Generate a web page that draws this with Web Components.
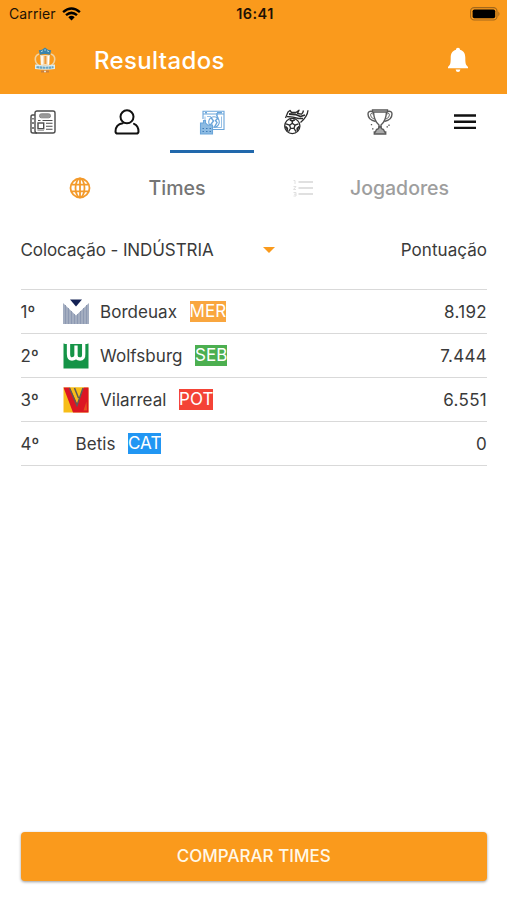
<!DOCTYPE html>
<html lang="pt-BR">
<head>
<meta charset="utf-8">
<meta name="viewport" content="width=device-width, initial-scale=1">
<title>Resultados</title>
<style>
	html, body {
		margin: 0;
		height: 100%;
		background: #fff;
		overflow: hidden;
	}
	body {
		font-family: Inter, "Liberation Sans", sans-serif;
		color: #3a3a3a;
		--brand: #fa9a1c;
	}
</style>
</head>
<body>
<results-page></results-page>
<script>
// Every element clones its own static template into an open shadow root
class BaseElement extends HTMLElement {
	constructor() {
		super();
		const host = document.createElement('template');
		host.innerHTML = this.constructor.template;
		this.attachShadow({mode: 'open'}).appendChild(host.content.cloneNode(true));
	}
}

const ICONS = {
	wifi: `<svg width="19" height="14" viewBox="0 0 19 14" fill="none" stroke="#000" stroke-width="2.5">
		<path d="M1.1 5.1Q9.5-2 17.9 5.1"/><path d="M4 8.1Q9.5 3.6 15 8.1"/>
		<path d="M6.3 10.3Q9.5 7.4 12.7 10.3L9.5 13.5Z" fill="#000" stroke="none"/></svg>`,
	battery: `<svg width="31" height="14" viewBox="0 0 31 14">
		<rect x=".6" y=".6" width="26.4" height="12.4" rx="3.6" fill="none" stroke="#a3681c" stroke-width="1.1"/>
		<rect x="2.6" y="2.4" width="22.6" height="8.8" rx="1.8" fill="#000"/>
		<path d="M28.4 4.6Q30.6 7 28.4 9.4Z" fill="#a3681c"/></svg>`,
	crest: `<svg width="22" height="27" viewBox="0 0 22 27">
		<path d="M5 7Q1 8.5 1.3 12.5Q1.6 17 6 19M17 7Q21 8.5 20.7 12.5Q20.4 17 16 19" fill="none" stroke="#f0d2a0" stroke-width="1.6"/>
		<path d="M6 8H16L15.2 18H6.8Z" fill="#f5dcb4"/>
		<path d="M8 9V17.5M14.4 9V17.5" stroke="#fff" stroke-width="1.5"/>
		<path d="M11.4 9V17" stroke="#ef9a3a" stroke-width="2"/>
		<path d="M4.8 3.2L8 2.8 11 .6 14 2.8 17.2 3.2 16 7.8Q11 6 6 7.8Z" fill="#3a84ab"/>
		<path d="M7 4.8L9 3.7M10.2 3H12M13 3.7L15 4.8" stroke="#b7dce8" stroke-width=".9"/>
		<path d="M1 17.5Q11 19 21 17.5V22Q11 23.5 1 22Z" fill="#dcebee"/>
		<path d="M2.5 20Q11 21.5 19.5 20" fill="none" stroke="#6aa5c2" stroke-width="2.2" stroke-dasharray="2.6 .5"/>
		<path d="M7 24.5H15" stroke="#c9803e" stroke-width="2"/><path d="M10 24.5H12" stroke="#f3e3cf" stroke-width="1.4"/></svg>`,
	bell: `<svg width="22" height="26" viewBox="0 0 22 26" fill="#fff">
		<path d="M11 .8C12.3.8 13 1.6 13 2.8 17 3.8 18.3 7 18.3 10.8 18.3 16 18.5 17.7 21 20V21.2H1V20C3.5 17.7 3.7 16 3.7 10.8 3.7 7 5 3.8 9 2.8 9 1.6 9.7.8 11 .8Z"/>
		<path d="M8.6 22.4H13.4Q13 24.9 11 24.9T8.6 22.4Z"/></svg>`,
	news: `<svg width="26" height="24" viewBox="0 0 26 24" fill="none" stroke="#4c4c4c" stroke-width="1.4">
		<rect x="5" y="1" width="20" height="22" rx="2"/>
		<path d="M5 5H2.5Q1 5 1 7V21Q1 23 3 23H7M3 8V9.5M3 12V14M3 17V19"/>
		<rect x="9.5" y="3.8" width="11" height="4" rx="1.8" fill="#999" stroke="#888" stroke-width="1"/>
		<path d="M8 10.5H10.5M12.5 10.5H22.5M16 13.3H22.5M16 16.3H22.5M16 19.3H22.5" stroke-width="1.1"/>
		<rect x="8" y="13" width="5.7" height="5.7"/><path d="M7.5 20.5H14" stroke-width="1" stroke="#aaa"/></svg>`,
	person: `<svg width="26" height="26" viewBox="0 0 26 26" fill="none" stroke="#111" stroke-width="2" stroke-linecap="round">
		<circle cx="13" cy="7.8" r="6.5"/>
		<path d="M8.8 14.2C3.5 15 1.5 18.3 1.5 22.5Q1.5 24.6 3.7 24.6H22.3Q24.5 24.6 24.5 22.5C24.5 18.7 23 16.2 20 14.9"/></svg>`,
	match: `<svg width="26" height="25" viewBox="0 0 26 25" fill="none" stroke="#6aa5da" stroke-width="1.1">
		<path d="M4 9V1.2H25V19.5H14M4 4H25M6 2.6H8M18 2.6H23"/>
		<path d="M6 6.5V10M22.5 6.5V17.5H15M8 6.5H12" stroke-width=".7"/>
		<circle cx="15" cy="12" r="5.3"/>
		<path d="M17.5 5L19 8 16.5 10.5 18 12.5 15.5 17M12 7.5L14.5 11 11 15.5M18 3V6" stroke-width="1.4"/>
		<path d="M1.5 24V13H4.5V10.5H6.5V13L8.5 15H13.5V24Z" fill="#8dbbe2"/>
		<path d="M3.5 18.5H5M7 18.5H8.5M10.5 18.5H12M3.5 21.5H5M7 21.5H8.5M10.5 21.5H12" stroke="#3f7cb8" stroke-width="1.2"/></svg>`,
	ball: `<svg width="26" height="26" viewBox="0 0 26 26" fill="none" stroke="#2b2b2b" stroke-width="1.3" stroke-linejoin="round">
		<circle cx="9.3" cy="17" r="7.6"/>
		<path d="M9.3 14.2L12 16.2 11 19.3H7.6L6.6 16.2Z"/>
		<path d="M9.3 14.2V11M12 16.2L15.4 14.8M11 19.3L13 22.6M7.6 19.3L5.5 22.6M6.6 16.2L3 14.8"/>
		<path d="M6.8 10.8L9.3 12 11.8 10.8M16.3 17.5L14.3 19.5 14.5 21.8M2.3 17.5L4.3 19.5 4 21.8" stroke-width="1.8"/>
		<path d="M2.5 9L5 3 7 1.5 8.5 3.5 13 3.5 16 1.2 14.5 4.5 18.5 5.2Q20 4 20.5 1.5M25 1.2Q24.5 7.5 17.5 13.5M4 7.5L10 8.2 15.5 9.5 20 9.5"/>
		<path d="M6 5L12.5 5.5 17.5 7.5 22 6" stroke-width="1.8"/></svg>`,
	trophy: `<svg width="26" height="26" viewBox="0 0 26 26" fill="none" stroke="#5a5a5a" stroke-width="1.4">
		<path d="M5.5 1H20.5V3H5.5ZM6.5 3Q7 12 12 16V18H14V16Q19 12 19.5 3"/>
		<path d="M5.7 2.5Q1 1.5 1 5 1 11 8.7 12.5M20.3 2.5Q25 1.5 25 5 25 11 17.3 12.5"/>
		<path d="M6 5Q3.5 3.5 3.5 5.8 3.7 9 7 10M20 5Q22.5 3.5 22.5 5.8 22.3 9 19 10" stroke-width=".9"/>
		<path d="M12 18Q12 20 9.5 20.5L8.3 23H7.3V25H18.7V23H17.7L16.5 20.5Q14 20 14 18Z" fill="#aaa"/>
		<path d="M4.5 15V16.3M5 19.8H6.5M19.5 17.8H21M22 15.5V17" stroke-width="1.3"/></svg>`,
	menu: `<svg width="24" height="18" viewBox="0 0 24 18" stroke="#111" stroke-width="2.4"><path d="M1 2.5H23M1 8.7H23M1 14.9H23"/></svg>`,
	globe: `<svg width="22" height="22" viewBox="0 0 22 22" fill="none" stroke="#f39a2b" stroke-width="1.8">
		<circle cx="11" cy="11" r="9.5"/><ellipse cx="11" cy="11" rx="4.5" ry="9.5"/><path d="M11 1.5V20.5M2.5 7.7H19.5M2.5 14.3H19.5"/></svg>`,
	list: `<svg width="22" height="18" viewBox="0 0 22 18" fill="none" stroke="#e0e0e0">
		<path d="M6.5 3H21M6.5 9H21M6.5 15H21" stroke-width="1.8"/>
		<path d="M1.5 1.5H3V5M1.5 7.5H4L1.5 10.5H4M1.5 13.5H4V17H1.5M2 15.2H4" stroke-width="1"/></svg>`,
	bordeaux: `<svg width="26" height="26" viewBox="0 0 26 26"><rect width="26" height="26" fill="#fff"/>
		<path d="M0 4L13 16.5 26 4V25H0Z" fill="#a3adc0"/>
		<path d="M2.5 6V25M5.5 9V25M8.5 12V25M11.5 15V25M14.5 15V25M17.5 12V25M20.5 9V25M23.5 6V25" stroke="#8d99b2" stroke-width="1"/>
		<path d="M7 .5H19L13 7.5Z" fill="#142255"/></svg>`,
	wolfsburg: `<svg width="26" height="26" viewBox="0 0 26 26"><rect x=".5" y=".5" width="25" height="25" fill="#159447"/>
		<path d="M1.5 0H24.5V1H1.5Z" fill="#fff"/>
		<path d="M5.5 0V11Q5.5 16 9 16T13 12.5V2.5M13 12.5Q13 16 17 16T20.7 11V0" fill="none" stroke="#fff" stroke-width="3.3"/></svg>`,
	vilarreal: `<svg width="26" height="26" viewBox="0 0 26 26"><rect x=".5" y=".5" width="25" height="25" fill="#f7bd18"/>
		<path d="M.5.5H7L14.5 17 20.5.5H25.5V25.5H10Z" fill="#dc1522"/>
		<path d="M23.500 14.500L20.500 23.500 24 23.500Z" fill="#e8501c"/>
		<path d="M7 .5H20.5L14.500 17Z" fill="#f7bd18"/>
		<path d="M6.500 1L14 18.500 20 1M11.500 1L15.500 11" fill="none" stroke="#5f5a58" stroke-width="1.500"/></svg>`
};

class AppIcon extends BaseElement {
	static get template() {
		return `<style>
				:host { display: inline-flex; flex: none; }
				svg { display: block; }
			</style>`;
	}

	connectedCallback() {
		this.shadowRoot.innerHTML += ICONS[this.getAttribute('name')];
	}
}
customElements.define('app-icon', AppIcon);

class StatusBar extends BaseElement {
	static get template() {
		return `<style>
				:host {
					display: grid;
					grid-template-columns: 1fr auto 1fr;
					align-items: center;
					height: 27px;
					padding: 0 6px 0 9px;
					color: #1d1205;
					font-size: 14px;
				}
				div { display: flex; align-items: center; gap: 6px; }
				span { letter-spacing: .1px; }
				b { font-size: 14.5px; font-weight: 600; letter-spacing: .45px; }
				.right { justify-content: flex-end; }
			</style>
			<div><span>Carrier</span><app-icon name="wifi"></app-icon></div>
			<b>16:41</b>
			<div class="right"><app-icon name="battery"></app-icon></div>`;
	}
}
customElements.define('status-bar', StatusBar);

class AppHeader extends BaseElement {
	static get template() {
		return `<style>
				:host {
					display: block;
					height: 94px;
					background: var(--brand);
				}
				.bar {
					display: flex;
					align-items: center;
					height: 66px;
					padding: 0 38px 0 34px;
				}
				h1 {
					flex: 1;
					margin: 0 0 0 38px;
					color: #fff;
					font-size: 24px;
					font-weight: 500;
					letter-spacing: .35px;
				}
			</style>
			<status-bar></status-bar>
			<div class="bar">
				<app-icon name="crest"></app-icon>
				<h1><slot></slot></h1>
				<app-icon name="bell"></app-icon>
			</div>`;
	}
}
customElements.define('app-header', AppHeader);

class TabBar extends BaseElement {
	static get template() {
		return `<style>
				:host {
					display: grid;
					grid-template-columns: repeat(6, 1fr);
					height: 59px;
					padding-left: 1px;
				}
				::slotted(*) {
					align-items: center;
					justify-content: center;
					box-sizing: border-box;
					border-bottom: 3px solid transparent;
				}
				::slotted([active]) { border-bottom-color: #2168ac; }
			</style>
			<slot></slot>`;
	}
}
customElements.define('tab-bar', TabBar);

class SubTab extends BaseElement {
	static get template() {
		return `<style>
				:host {
					display: grid;
					grid-template-columns: 22px 1fr;
					align-items: center;
					color: #9e9e9e;
					font-size: 19.5px;
					font-weight: 500;
				}
				:host([active]) { color: #757575; }
				span { text-align: center; }
			</style>
			<slot name="icon"></slot>
			<span><slot></slot></span>`;
	}
}
customElements.define('sub-tab', SubTab);

class TeamRow extends BaseElement {
	static get template() {
		return `<style>
				:host {
					display: flex;
					align-items: center;
					box-sizing: border-box;
					height: 44px;
					border-bottom: 1px solid #d9d9d9;
				}
				.place { width: 42px; }
				.tag {
					margin-left: 12.5px;
					line-height: 21px;
					color: #fff;
				}
				.points { margin-left: auto; letter-spacing: .3px; }
				::slotted(app-icon) { margin-right: 11.5px; }
			</style>
			<span class="place"></span>
			<slot name="logo"></slot>
			<slot></slot>
			<span class="tag"></span>
			<span class="points"></span>`;
	}

	connectedCallback() {
		for (const name of ['place', 'tag', 'points'])
			this.shadowRoot.querySelector('.' + name).textContent = this.getAttribute(name);
		this.shadowRoot.querySelector('.tag').style.background = this.getAttribute('color');
	}
}
customElements.define('team-row', TeamRow);

class RankingTable extends BaseElement {
	static get template() {
		return `<style>
				:host {
					display: block;
					padding: 0 20px 0 20.5px;
					font-size: 17px;
					letter-spacing: .05px;
				}
				.head {
					display: flex;
					align-items: center;
					height: 79px;
					border-bottom: 1px solid #d9d9d9;
				}
				.filter { width: 242px; letter-spacing: -.08px; }
				.arrow {
					border: 6.5px solid transparent;
					border-top-color: var(--brand);
					border-bottom: 0;
				}
				.points { margin-left: auto; }
			</style>
			<div class="head">
				<span class="filter">Colocação - INDÚSTRIA</span>
				<i class="arrow"></i>
				<span class="points">Pontuação</span>
			</div>
			<slot></slot>`;
	}
}
customElements.define('ranking-table', RankingTable);

class RaisedButton extends BaseElement {
	static get template() {
		return `<style>
				:host { display: block; }
				button {
					display: block;
					width: 100%;
					height: 49px;
					padding: 0 0 2px;
					border: 0;
					border-radius: 4px;
					background: var(--brand);
					box-shadow: 0 1px 3px rgba(0, 0, 0, .4);
					color: #fff8e8;
					font: 500 17px Inter, "Liberation Sans", sans-serif;
				}
			</style>
			<button><slot></slot></button>`;
	}
}
customElements.define('raised-button', RaisedButton);

class ResultsPage extends BaseElement {
	static get template() {
		return `<style>
				:host {
					display: flex;
					flex-direction: column;
					height: 900px;
				}
				.subtabs {
					display: grid;
					grid-template-columns: 223px 1fr;
					box-sizing: border-box;
					height: 57px;
					padding: 12px 22px 0 69px;
				}
				.first { padding-right: 29px; }
				raised-button { margin: auto 20px 19px 20.5px; }
			</style>
			<app-header>Resultados</app-header>
			<tab-bar>
				<app-icon name="news"></app-icon>
				<app-icon name="person"></app-icon>
				<app-icon name="match" active></app-icon>
				<app-icon name="ball"></app-icon>
				<app-icon name="trophy"></app-icon>
				<app-icon name="menu"></app-icon>
			</tab-bar>
			<div class="subtabs">
				<sub-tab class="first" active><app-icon slot="icon" name="globe"></app-icon>Times</sub-tab>
				<sub-tab><app-icon slot="icon" name="list"></app-icon>Jogadores</sub-tab>
			</div>
			<ranking-table>
				<team-row place="1º" tag="MER" color="#f9a63f" points="8.192"><app-icon slot="logo" name="bordeaux"></app-icon>Bordeuax</team-row>
				<team-row place="2º" tag="SEB" color="#4caf50" points="7.444"><app-icon slot="logo" name="wolfsburg"></app-icon>Wolfsburg</team-row>
				<team-row place="3º" tag="POT" color="#f44336" points="6.551"><app-icon slot="logo" name="vilarreal"></app-icon>Vilarreal</team-row>
				<team-row place="4º" tag="CAT" color="#2196f3" points="0"><span style="width: 13px" slot="logo"></span>Betis</team-row>
			</ranking-table>
			<raised-button>COMPARAR TIMES</raised-button>`;
	}
}
customElements.define('results-page', ResultsPage);
</script>
</body>
</html>
